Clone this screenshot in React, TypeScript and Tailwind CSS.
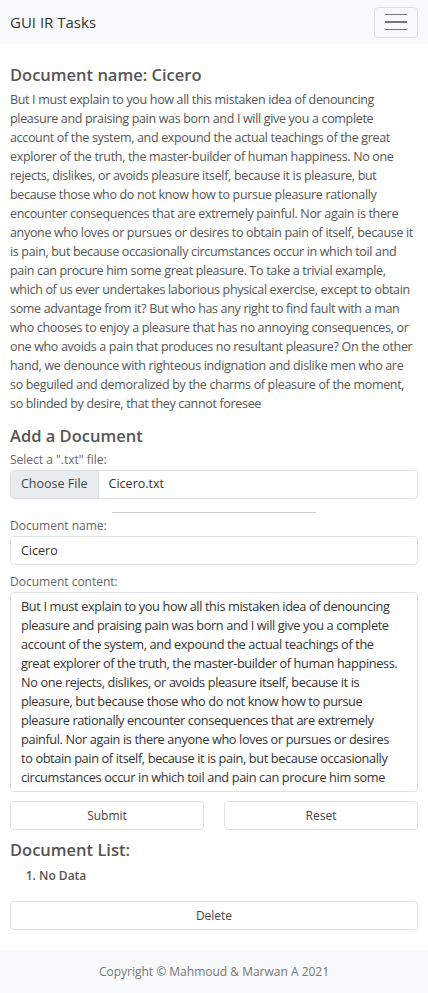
import { useState } from "react";

const CICERO =
  "But I must explain to you how all this mistaken idea of denouncing pleasure and praising pain was born and I will give you a complete account of the system, and expound the actual teachings of the great explorer of the truth, the master-builder of human happiness. No one rejects, dislikes, or avoids pleasure itself, because it is pleasure, but because those who do not know how to pursue pleasure rationally encounter consequences that are extremely painful. Nor again is there anyone who loves or pursues or desires to obtain pain of itself, because it is pain, but because occasionally circumstances occur in which toil and pain can procure him some great pleasure. To take a trivial example, which of us ever undertakes laborious physical exercise, except to obtain some advantage from it? But who has any right to find fault with a man who chooses to enjoy a pleasure that has no annoying consequences, or one who avoids a pain that produces no resultant pleasure? On the other hand, we denounce with righteous indignation and dislike men who are so beguiled and demoralized by the charms of pleasure of the moment, so blinded by desire, that they cannot foresee";

export default function App() {
  const [name, setName] = useState("Cicero");
  const [content, setContent] = useState(CICERO);

  return (
    <div className="min-h-screen flex flex-col bg-white text-[#555] font-['Open_Sans',sans-serif]">
      <nav className="h-[44px] shrink-0 bg-[#f8f9fa] flex items-center justify-between px-[10px]">
        <span className="text-[15px] text-[#333]">GUI IR Tasks</span>
        <button className="w-[44px] h-[31px] border border-black/10 rounded flex flex-col items-center justify-center gap-[6px]">
          <span className="block w-[22px] h-[1.5px] bg-[#777]" />
          <span className="block w-[22px] h-[1.5px] bg-[#777]" />
          <span className="block w-[22px] h-[1.5px] bg-[#777]" />
        </button>
      </nav>

      <main className="flex-1 px-[10px] pt-[20px] pb-[20px]">
        <h2 className="text-[16.5px] font-semibold leading-[22px] text-[#555]">Document name: {name}</h2>
        <p className="text-[12.5px] tracking-[-0.33px] leading-[19px] mt-[4px] text-[#555]">{content}</p>

        <h2 className="text-[16.5px] font-semibold leading-[22px] mt-[12px] text-[#555]">Add a Document</h2>
        <label className="block text-[12px] leading-[18px] mt-[4px] text-[#666]">Select a ".txt" file:</label>
        <div className="mt-[1px] h-[29px] flex border border-[#dee2e6] rounded overflow-hidden text-[12.5px]">
          <span className="px-[10px] flex items-center bg-[#e9ecef] border-r border-[#dee2e6] text-[#444]">Choose File</span>
          <span className="px-[10px] flex items-center text-[#333]">Cicero.txt</span>
        </div>
        <hr className="w-1/2 mx-auto mt-[13px] border-t border-[#ccc]" />

        <label className="block text-[12px] leading-[18px] mt-[4px] text-[#666]">Document name:</label>
        <input
          value={name}
          onChange={(e) => setName(e.target.value)}
          className="mt-[1px] w-full h-[29px] px-[10px] border border-[#dee2e6] rounded text-[12.5px] text-[#333] outline-none"
        />

        <label className="block text-[12px] leading-[18px] mt-[8px] text-[#666]">Document content:</label>
        <textarea
          value={content}
          onChange={(e) => setContent(e.target.value)}
          className="mt-[1px] block w-full h-[200px] pl-[10px] pr-[14px] py-[4px] border border-[#dee2e6] rounded text-[12.75px] tracking-[-0.38px] leading-[19px] text-[#333] resize-none outline-none overflow-hidden"
        />

        <div className="mt-[9px] grid grid-cols-2 gap-[20px]">
          <button className="h-[29px] border border-[#dee2e6] rounded text-[12px] text-[#444]">Submit</button>
          <button className="h-[29px] border border-[#dee2e6] rounded text-[12px] text-[#444]">Reset</button>
        </div>

        <h2 className="text-[16.5px] font-semibold leading-[22px] mt-[9px] text-[#555]">Document List:</h2>
        <ol className="list-decimal pl-[29px] mt-[6px] text-[12px] font-semibold text-[#555]">
          <li>No Data</li>
        </ol>

        <button className="mt-[16px] w-full h-[29px] border border-[#dee2e6] rounded text-[12px] text-[#444]">Delete</button>
      </main>

      <footer className="shrink-0 h-[43px] bg-[#f8f9fa] flex items-center justify-center text-[12px] text-[#777]">
        Copyright © Mahmoud &amp; Marwan A 2021
      </footer>
    </div>
  );
}
